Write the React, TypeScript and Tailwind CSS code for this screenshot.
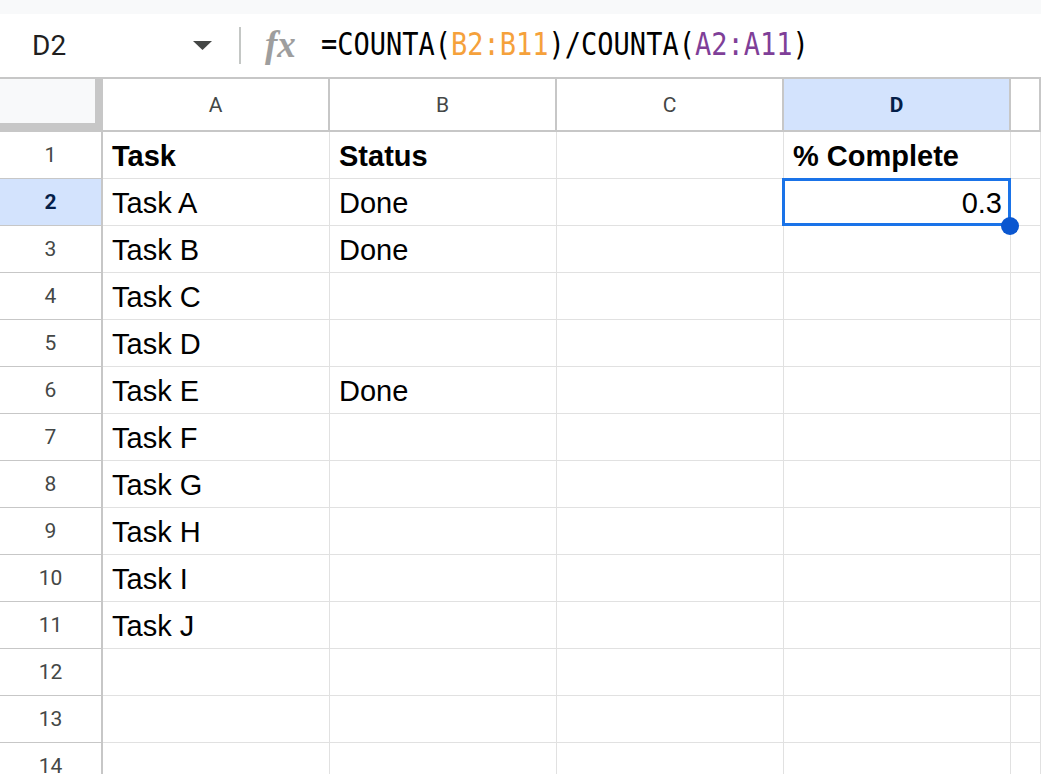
import React from 'react';

const COLS = ['A', 'B', 'C', 'D', 'E'];

type Row = { cells: string[]; bold?: boolean };

const ROWS: Row[] = [
  { cells: ['Task', 'Status', '', '% Complete'], bold: true },
  { cells: ['Task A', 'Done', '', '0.3'] },
  { cells: ['Task B', 'Done'] },
  { cells: ['Task C'] },
  { cells: ['Task D'] },
  { cells: ['Task E', 'Done'] },
  { cells: ['Task F'] },
  { cells: ['Task G'] },
  { cells: ['Task H'] },
  { cells: ['Task I'] },
  { cells: ['Task J'] },
  { cells: [] },
  { cells: [] },
  { cells: [] },
];

const FormulaBar: React.FC = () => (
  <div className="h-[65px] shrink-0 flex items-center bg-white border-b-2 border-[#c7c7c7]">
    {/* name box */}
    <div className="w-[239px] flex items-center pl-[32px] pr-[27px]">
      <span className="text-[28px] text-[#1f1f1f] font-['Roboto',sans-serif]">D2</span>
      <svg className="ml-auto" width="19" height="9" viewBox="0 0 19 9">
        <path d="M0 0 L19 0 L9.5 9 Z" fill="#444746" />
      </svg>
    </div>
    <div className="w-[2px] h-[37px] bg-[#c4c7c5]" />
    <span className="ml-[24px] w-[56px] text-[37px] leading-none font-bold italic text-[#9e9e9e] font-['Liberation_Serif',serif] -mt-[2px]">
      fx
    </span>
    <div className="text-[27px] font-['DejaVu_Sans_Mono',monospace] text-black scale-y-[1.15] whitespace-nowrap">
      =COUNTA(<span className="text-[#f5a13b]">B2:B11</span>)/COUNTA(
      <span className="text-[#7f3f98]">A2:A11</span>)
    </div>
  </div>
);

const HeaderRow: React.FC = () => (
  <div className="flex h-[53px] shrink-0">
    <div className="w-[103px] shrink-0 bg-[#f8f9fa] border-r-[8px] border-b-[9px] border-[#c7c7c7]" />
    {COLS.map((c, i) => (
      <div
        key={c}
        className={`${i === 4 ? 'flex-1' : 'w-[227px] shrink-0'} flex items-center justify-center pt-[2px] border-r-2 border-b-2 border-[#c7c7c7] text-[21px] font-['Roboto',sans-serif] ${
          c === 'D' ? 'bg-[#d3e3fd] text-[#041e49] font-bold' : 'bg-white text-[#444746]'
        }`}
      >
        {i === 4 ? '' : c}
      </div>
    ))}
  </div>
);

const BodyRow: React.FC<{ row: Row; index: number }> = ({ row, index }) => {
  const n = index + 1;
  const selected = n === 2;
  return (
    <div className="flex h-[47px] shrink-0">
      <div
        className={`w-[103px] shrink-0 flex items-center justify-center pt-[2px] border-r-2 border-b border-[#c7c7c7] text-[21px] font-['Roboto',sans-serif] ${
          selected ? 'bg-[#d3e3fd] text-[#041e49] font-bold' : 'bg-white text-[#444746]'
        }`}
      >
        {n}
      </div>
      {COLS.map((c, i) => {
        const text = row.cells[i] ?? '';
        const isNum = text !== '' && !isNaN(Number(text));
        return (
          <div
            key={c}
            className={`${i === 4 ? 'flex-1' : 'w-[227px] shrink-0'} relative border-r border-b border-[#e1e1e1] px-[9px] pt-[3px] leading-[43px] text-[29px] text-black font-['Liberation_Sans',Arial,sans-serif] whitespace-nowrap ${
              row.bold ? 'font-bold' : ''
            } ${isNum ? 'text-right pr-[8px]' : ''}`}
          >
            {text}
            {selected && c === 'D' && (
              <>
                <div className="absolute z-10 -left-[2px] -top-[1px] -right-[1px] -bottom-[1px] border-[3px] border-[#1a73e8]" />
                <div className="absolute z-20 -right-[9px] -bottom-[10px] w-[18px] h-[18px] rounded-full bg-[#0b57d0]" />
              </>
            )}
          </div>
        );
      })}
    </div>
  );
};

const App: React.FC = () => {
  return (
    <div className="h-screen w-full overflow-hidden bg-white flex flex-col">
      <div className="h-[14px] shrink-0 bg-[#f8f9fa]" />
      <FormulaBar />
      <HeaderRow />
      {ROWS.map((row, i) => (
        <BodyRow key={i} row={row} index={i} />
      ))}
    </div>
  );
};

export default App;
